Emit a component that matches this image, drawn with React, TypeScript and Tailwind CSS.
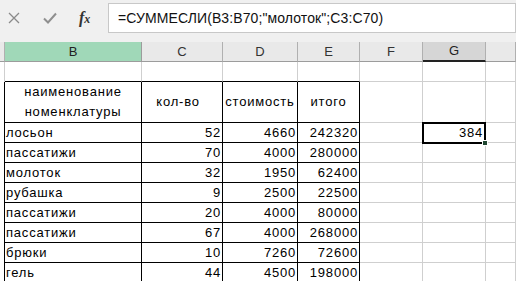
import React from 'react'

type Row = [string, number, number, number]

const rows: Row[] = [
  ['лосьон', 52, 4660, 242320],
  ['пассатижи', 70, 4000, 280000],
  ['молоток', 32, 1950, 62400],
  ['рубашка', 9, 2500, 22500],
  ['пассатижи', 20, 4000, 80000],
  ['пассатижи', 67, 4000, 268000],
  ['брюки', 10, 7260, 72600],
  ['гель', 44, 4500, 198000],
]

const font = { fontFamily: '"Liberation Sans", Arial, sans-serif' }

function FormulaBar() {
  return (
    <div className="flex h-[38px] bg-[#f0f0f0] pt-[3px] pb-[5px]">
      <div className="flex w-[108px] items-center">
        <svg width="12" height="12" viewBox="0 0 12 12" className="ml-[8px]">
          <path d="M1 1 L11 11 M11 1 L1 11" stroke="#8a8a8a" strokeWidth="1.3" />
        </svg>
        <svg width="14" height="12" viewBox="0 0 14 12" className="ml-[23px]">
          <path d="M1 6.5 L5 10.5 L13 1.5" stroke="#8f8f8f" strokeWidth="2" fill="none" />
        </svg>
        <span
          className="ml-[22px] text-[16px] font-bold italic text-[#333]"
          style={{ fontFamily: '"Liberation Serif", "Times New Roman", serif' }}
        >
          f<span className="text-[12px]">x</span>
        </span>
      </div>
      <div
        className="flex flex-1 items-center border border-[#c8c8c8] bg-white pl-[9px] text-[14px] tracking-[0.1px] text-[#111]"
        style={font}
      >
        =СУММЕСЛИ(B3:B70;"молоток";C3:C70)
      </div>
    </div>
  )
}

const widths = ['w-[5px]', 'w-[137px]', 'w-[81px]', 'w-[75px]', 'w-[62px]', 'w-[63px]', 'w-[63px]', 'flex-1']

function ColumnHeaders() {
  const letters = ['', 'B', 'C', 'D', 'E', 'F', 'G', '']
  return (
    <div className="flex h-[24px] bg-[#f0f0f0] pt-[4px]">
      {letters.map((l, i) => (
        <div
          key={i}
          className={`${widths[i]} flex items-center justify-center border-r text-[13px] ${
            i === 1
              ? 'border-[#9c9c9c] border-b border-b-[#9c9c9c] bg-[#a0d8b8] text-[#222]'
              : i === 6
                ? 'border-[#b0b0b0] border-b-2 border-b-[#222] bg-[#d6d6d6] text-[#222]'
                : 'border-[#b0b0b0] border-b border-b-[#9c9c9c] bg-[#e9e9e9] text-[#333]'
          }`}
          style={font}
        >
          {l}
        </div>
      ))}
    </div>
  )
}

function Grid() {
  return (
    <div className="bg-white text-[13px] tracking-[0.8px] text-black" style={font}>
      {/* empty row 2 */}
      <div className="flex h-[20px]">
        <div className={`${widths[0]} border-r border-[#cfcfcf]`} />
        {[1, 2, 3, 4].map((i) => (
          <div key={i} className={`${widths[i]} border-r border-b border-r-[#cfcfcf] border-b-black`} />
        ))}
        {[5, 6, 7].map((i) => (
          <div key={i} className={`${widths[i]} border-r border-b border-[#cfcfcf]`} />
        ))}
      </div>
      {/* table header */}
      <div className="flex h-[41px]">
        <div className={`${widths[0]} border-r border-black`} />
        <div className={`${widths[1]} flex flex-col items-center justify-center border-r border-b border-black leading-[20px]`}>
          <span>наименование</span>
          <span>номенклатуры</span>
        </div>
        <div className={`${widths[2]} flex items-center justify-center border-r border-b border-black pr-[8px]`}>кол-во</div>
        <div className={`${widths[3]} flex items-center justify-center border-r border-b border-black`}>стоимость</div>
        <div className={`${widths[4]} flex items-center justify-center border-r border-b border-black`}>итого</div>
        {[5, 6, 7].map((i) => (
          <div key={i} className={`${widths[i]} border-r border-b border-[#cfcfcf]`} />
        ))}
      </div>
      {rows.map((r, idx) => (
        <div key={idx} className="flex h-[20px]">
          <div className={`${widths[0]} border-r border-black`} />
          <div className={`${widths[1]} flex items-center border-r border-b border-black pl-[1px]`}>{r[0]}</div>
          <div className={`${widths[2]} flex items-center justify-end border-r border-b border-black pr-[1px]`}>{r[1]}</div>
          <div className={`${widths[3]} flex items-center justify-end border-r border-b border-black pr-[1px]`}>{r[2]}</div>
          <div className={`${widths[4]} flex items-center justify-end border-r border-b border-black pr-[1px]`}>{r[3]}</div>
          <div className={`${widths[5]} border-r border-b border-[#cfcfcf]`} />
          {idx === 0 ? (
            <div className={`${widths[6]} relative -mt-[1px] -ml-[1px] -mb-[1px] flex h-[22px] w-[64px] items-center justify-end border-2 border-black pr-[1px]`}>
              384
              <span className="absolute -right-[4px] -bottom-[4px] h-[6px] w-[6px] border border-white bg-[#1e4630]" />
            </div>
          ) : (
            <div className={`${widths[6]} border-r border-b border-[#cfcfcf]`} />
          )}
          <div className={`${widths[7]} border-r border-b border-[#cfcfcf]`} />
        </div>
      ))}
    </div>
  )
}

export default function App() {
  return (
    <div className="h-[281px] w-[516px] overflow-hidden bg-white">
      <FormulaBar />
      <ColumnHeaders />
      <Grid />
    </div>
  )
}
